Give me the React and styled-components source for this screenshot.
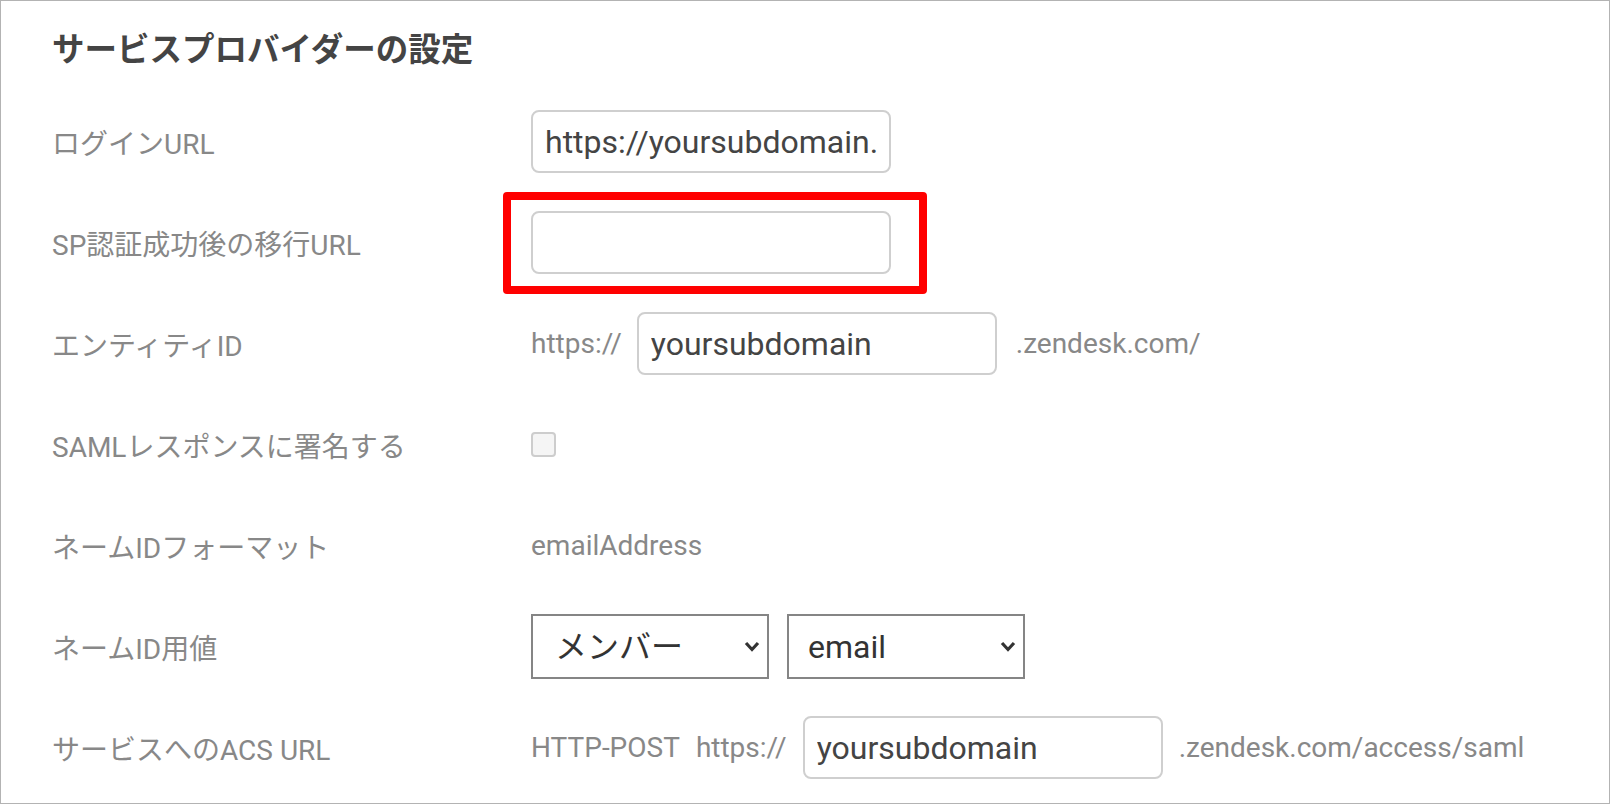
import React from 'react';
import styled, { createGlobalStyle } from 'styled-components';

const GlobalStyle = createGlobalStyle`
  html, body {
    margin: 0;
    padding: 0;
    background: #fff;
  }
  body {
    font-family: Roboto, "Noto Sans CJK JP", sans-serif;
  }
`;

const Frame = styled.div`
  box-sizing: border-box;
  width: 1610px;
  height: 804px;
  border: 1px solid #b3b3b3;
  padding: 1px 0 0 51px;
  overflow: hidden;
`;

const Title = styled.h2`
  margin: 0;
  height: 89px;
  display: flex;
  align-items: center;
  font-size: 32.5px;
  font-weight: 700;
  color: #444;
`;

const Row = styled.div`
  display: grid;
  grid-template-columns: 479px auto;
  align-items: center;
  height: 101px;
`;

const Label = styled.div`
  font-size: 28px;
  color: #888;
`;

const Field = styled.div`
  display: flex;
  align-items: center;
  gap: ${props => props.$gap || 18}px;
`;

const Plain = styled.span`
  font-size: 28px;
  color: #888;
  white-space: pre;
  margin-left: ${props => props.$shift || 0}px;
`;

const TextInput = styled.input`
  box-sizing: border-box;
  width: 360px;
  height: 63px;
  border: 2px solid #cfcfcf;
  border-radius: 8px;
  padding: 0 12px;
  font-family: inherit;
  font-size: 32px;
  color: #444;
  background: #fff;
  outline: none;
`;

const Highlight = styled.span`
  position: relative;
  display: inline-flex;

  &::after {
    content: '';
    position: absolute;
    top: -19px;
    left: -28px;
    right: -36px;
    bottom: -20px;
    border: 8px solid #ff0000;
    border-radius: 4px;
    pointer-events: none;
  }
`;

const Checkbox = styled.input.attrs({ type: 'checkbox' })`
  appearance: none;
  box-sizing: border-box;
  width: 25px;
  height: 25px;
  margin: 0;
  border: 2px solid #cdcdcd;
  border-radius: 4px;
  background: #f5f5f5;
`;

const SelectWrap = styled.span`
  position: relative;
  display: inline-flex;
`;

const Select = styled.select`
  appearance: none;
  box-sizing: border-box;
  width: 238px;
  height: 65px;
  border: 2px solid #858585;
  border-radius: 0;
  padding: 0 36px 0 ${props => props.$indent || 22}px;
  font-family: inherit;
  font-size: 32px;
  color: #333;
  background: #fff;
  outline: none;
`;

const Chevron = styled.svg`
  position: absolute;
  right: 9px;
  top: 27px;
  pointer-events: none;
`;

const Dropdown = ({ value, options, indent }) => (
  <SelectWrap>
    <Select defaultValue={value} $indent={indent}>
      {options.map(o => <option key={o}>{o}</option>)}
    </Select>
    <Chevron width="16" height="11" viewBox="0 0 16 11">
      <path d="M2 2 L8 8.5 L14 2" fill="none" stroke="#333" strokeWidth="3.2" />
    </Chevron>
  </SelectWrap>
);

export default function App() {
  return (
    <>
      <GlobalStyle />
      <Frame>
        <Title>サービスプロバイダーの設定</Title>

        <Row>
          <Label>ログインURL</Label>
          <Field>
            <TextInput defaultValue="https://yoursubdomain.zendesk.com/access/login" />
          </Field>
        </Row>

        <Row>
          <Label>SP認証成功後の移行URL</Label>
          <Field>
            <Highlight>
              <TextInput defaultValue="" />
            </Highlight>
          </Field>
        </Row>

        <Row>
          <Label>エンティティID</Label>
          <Field $gap={15}>
            <Plain>https://</Plain>
            <TextInput defaultValue="yoursubdomain" />
            <Plain $shift={4}>.zendesk.com/</Plain>
          </Field>
        </Row>

        <Row>
          <Label>SAMLレスポンスに署名する</Label>
          <Field>
            <Checkbox />
          </Field>
        </Row>

        <Row>
          <Label>ネームIDフォーマット</Label>
          <Field>
            <Plain>emailAddress</Plain>
          </Field>
        </Row>

        <Row>
          <Label>ネームID用値</Label>
          <Field>
            <Dropdown value="メンバー" options={['メンバー', 'ユーザー']} indent={22} />
            <Dropdown value="email" options={['email', 'id']} indent={19} />
          </Field>
        </Row>

        <Row>
          <Label>サービスへのACS URL</Label>
          <Field $gap={16}>
            <Plain>HTTP-POST</Plain>
            <Plain>https://</Plain>
            <TextInput defaultValue="yoursubdomain" />
            <Plain>.zendesk.com/access/saml</Plain>
          </Field>
        </Row>
      </Frame>
    </>
  );
}
